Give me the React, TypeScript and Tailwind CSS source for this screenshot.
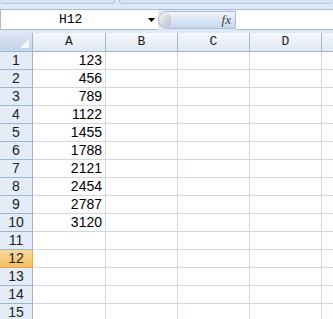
import React from 'react';

const values = [123, 456, 789, 1122, 1455, 1788, 2121, 2454, 2787, 3120];
const cols = [
  { name: 'A', w: 'w-[73px]' },
  { name: 'B', w: 'w-[72px]' },
  { name: 'C', w: 'w-[72px]' },
  { name: 'D', w: 'w-[72px]' },
];

const Row = ({ n }: { n: number }) => {
  const selected = n === 12;
  return (
    <div className="flex h-[18px] shrink-0">
      <div
        className={
          selected
            ? 'w-[33px] shrink-0 flex items-center justify-center border-r border-b border-[#f2a83a] bg-gradient-to-b from-[#f9d99f] to-[#f1c05c] text-[14px] text-[#222]'
            : 'w-[33px] shrink-0 flex items-center justify-center border-r border-b border-[#9eb6ce] bg-[#e4ecf7] text-[14px] text-[#222]'
        }
      >
        {n}
      </div>
      {cols.map((c, i) => (
        <div
          key={c.name}
          className={`${c.w} shrink-0 flex items-center justify-end pr-[3px] border-r border-b border-[#d0d7e5] bg-white text-[14px] text-black`}
        >
          {i === 0 && n <= values.length ? values[n - 1] : ''}
        </div>
      ))}
      <div className="flex-1 border-b border-[#d0d7e5] bg-white" />
    </div>
  );
};

export default function App() {
  return (
    <div className="w-[333px] h-[319px] overflow-hidden flex flex-col bg-white font-['Liberation_Sans',sans-serif]">
      {/* ribbon remnant */}
      <div className="h-[10px] shrink-0 flex gap-[4px] bg-[#dfe9f5] border-b border-[#a7bcd6]">
        <div className="w-[115px] h-[4px] rounded-b-[3px] border-b border-r border-[#b3c6dd] bg-[#d5e2f2]" />
        <div className="flex-1 h-[4px] rounded-b-[3px] border-b border-l border-[#b3c6dd] bg-[#d5e2f2]" />
      </div>

      {/* formula bar */}
      <div className="h-[20px] shrink-0 flex bg-[#dfe9f5]">
        <div className="w-[158px] flex items-center bg-white border-l border-b border-[#a7bcd6] pl-[58px] pr-[3px]">
          <span className="flex-1 font-['Liberation_Mono',monospace] text-[13px] text-black">H12</span>
          <svg width="7" height="4" viewBox="0 0 7 4">
            <path d="M0 0h7L3.5 4z" fill="#000" />
          </svg>
        </div>
        <div className="w-[78px] my-[1px] flex items-center justify-between rounded-l-[10px] border border-[#a9bfd9] bg-gradient-to-b from-[#f0f5fb] via-[#dbe6f3] to-[#c6d7ec] pl-[2px] pr-[4px]">
          <div className="w-[10px] h-[14px] rounded-full bg-gradient-to-br from-[#f4f4f4] to-[#b8bcc2]" />
          <span className="font-['Liberation_Serif',serif] italic text-[13px] text-[#444]">fx</span>
        </div>
        <div className="flex-1 bg-white border-b border-[#a7bcd6]" />
      </div>
      <div className="h-[3px] shrink-0 bg-[#dfe9f5]" />

      {/* column headers */}
      <div className="flex h-[19px] shrink-0 font-['Liberation_Mono',monospace] text-[13px] text-[#222]">
        <div className="w-[33px] shrink-0 flex items-end justify-end p-[3px] border-r border-b border-[#9eb6ce] bg-gradient-to-b from-[#dbe5f3] to-[#c4d3e8]">
          <svg width="9" height="9" viewBox="0 0 9 9">
            <path d="M9 0v9H0z" fill="#f4f7fb" />
          </svg>
        </div>
        {cols.map((c) => (
          <div
            key={c.name}
            className={`${c.w} shrink-0 flex items-center justify-center border-r border-b border-[#9eb6ce] bg-gradient-to-b from-[#f6f9fc] to-[#e0e8f3]`}
          >
            {c.name}
          </div>
        ))}
        <div className="flex-1 border-b border-[#9eb6ce] bg-gradient-to-b from-[#f6f9fc] to-[#e0e8f3]" />
      </div>

      {Array.from({ length: 15 }, (_, i) => (
        <Row key={i} n={i + 1} />
      ))}
    </div>
  );
}
